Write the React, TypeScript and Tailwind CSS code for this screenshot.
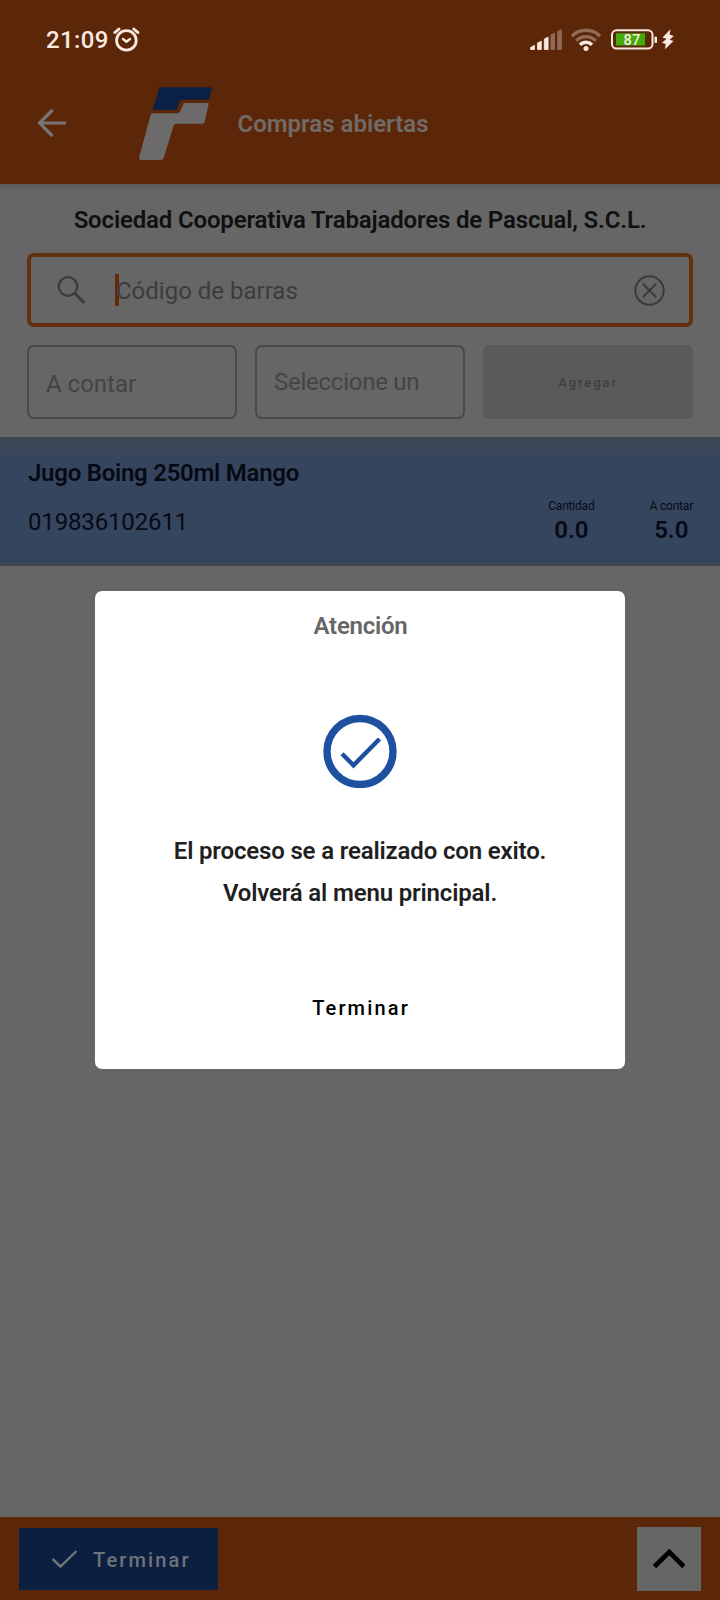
import React from "react";

function StatusBar() {
  return (
    <div className="flex h-[80px] shrink-0 items-start justify-between pl-[46px] pr-[46px]">
      <div className="flex items-center pt-[26px]">
        <span className="w-[63px] text-[24px] font-medium leading-[28px] tracking-[0.35px] text-[#fbe9e0]">21:09</span>
        <svg className="ml-[4px]" width="28" height="28" viewBox="0 0 28 28" fill="none" stroke="#fbe9e0" strokeLinecap="round">
          <circle cx="13.4" cy="14.4" r="9.8" strokeWidth="2.800" />
          <path d="M1.800 6.600L6 3M25 6.600L20.800 3" strokeWidth="2.800" />
          <path d="M10 13l3.400 2.800 3.600-2.800" strokeWidth="2.400" />
        </svg>
      </div>
      <svg className="mt-[26px]" width="145" height="28" viewBox="529 26 145 28" fill="none">
        <g fill="#fbe9e0" stroke="#fbe9e0" strokeWidth="0.800" strokeLinejoin="round">
          <path d="M530.500 49.500v-2l4-2.200v4.200zM537.500 49.500v-6.500l3.800-1.800v8.300zM544.300 49.500V39l3.800-2v12.500z" />
        </g>
        <g fill="#916b57" stroke="#916b57" strokeWidth="0.800" strokeLinejoin="round">
          <path d="M550.900 49.500V35l3.600-2v16.500zM557.700 49.500V31.600l3.700-1.900v19.800z" />
        </g>
        <path d="M572 36.200a19.500 19.500 0 0 1 28 0" stroke="#916b57" strokeWidth="3.400" />
        <path d="M576.200 40.800a13.500 13.500 0 0 1 19.600 0" stroke="#916b57" strokeWidth="3.400" />
        <path d="M580 44.700a8.500 8.500 0 0 1 12 0" stroke="#fbe9e0" strokeWidth="3.400" />
        <circle cx="586" cy="48.400" r="2.500" fill="#fbe9e0" />
        <rect x="612" y="30.300" width="40.500" height="18.200" rx="4.500" stroke="#fbe9e0" strokeWidth="2" />
        <rect x="616" y="33.300" width="29" height="12.200" fill="#43ab0b" />
        <rect x="654.500" y="36.500" width="2.500" height="6.500" rx="1" fill="#fbe9e0" />
        <text x="632" y="45" textAnchor="middle" fill="#fbe9e0" className="font-['Roboto'] text-[14.500px] font-medium tracking-[0.300px]">87</text>
        <path d="M670.500 29.300l-8 8.200 4 1.300-4.500 4 3.700 1.200-.700 5.300 8.500-8.300-3.800-1.200 4-3.800-4-1.500z" fill="#fbe9e0" />
      </svg>
    </div>
  );
}

function Header() {
  return (
    <header className="flex h-[184px] shrink-0 flex-col bg-[#5b2708]">
      <StatusBar />
      <div className="flex h-[87px] items-center pl-[36px]">
        <svg className="mb-[2px]" width="32" height="30" viewBox="0 0 32 30" fill="none" stroke="#797474" strokeWidth="3.200">
          <path d="M30 15H3.500M16.500 2L3.500 15l13 13" />
        </svg>
        <svg className="ml-[70px]" width="76" height="76" viewBox="138 86 76 76">
          <path d="M161 87.300H210.500Q212 87.300 211.700 88.700L209.500 98.500Q209.200 99.800 207.800 99.800H182Q180 99.800 179.300 101.600L176.500 110H152.500L159.300 88.600Q159.700 87.300 161 87.300Z" fill="#0b2045" />
          <path d="M183.800 103H208.800L204.800 121.700Q204.300 123.700 202.300 123.700H176Q174.200 123.700 173.700 125.500L164 157Q163 160 160.500 160H141.500Q138.400 160 139.200 157L150.800 114.500Q151.300 113.200 152.500 113.200H177.500Q179.300 113.200 180 111.400Z" fill="#6c6a6a" />
        </svg>
        <h1 className="ml-[23.500px] text-[24px] font-semibold leading-[28px] text-[#716a67]">Compras abiertas</h1>
      </div>
    </header>
  );
}

function SearchForm() {
  return (
    <section className="flex h-[253px] shrink-0 flex-col bg-[linear-gradient(to_bottom,#595959,#666666_6px)] px-[27px]">
      <h2 className="mt-[22px] whitespace-nowrap text-center text-[24px] font-semibold leading-[28px] tracking-[-0.160px] text-[#101010]">
        Sociedad Cooperativa Trabajadores de Pascual, S.C.L.
      </h2>
      <div className="mt-[19px] flex h-[74px] shrink-0 items-center rounded-[7px] border-[4px] border-[#62300f] pl-[26px] pr-[24px]">
        <svg width="29" height="30" viewBox="0 0 29 30" fill="none" stroke="#3b3b3b" strokeWidth="2.200">
          <circle cx="11" cy="11.500" r="9.300" />
          <path d="M17.800 18.300l9.500 9.500" strokeWidth="3" />
        </svg>
        <div className="ml-[29px] h-[32px] w-[4px] bg-[#622a08]" />
        <span className="ml-[-3px] pt-[2px] text-[24px] leading-[28px] text-[#3c3c3c]">Código de barras</span>
        <svg className="ml-auto" width="31" height="31" viewBox="0 0 31 31" fill="none" stroke="#3b3b3b" strokeWidth="2">
          <circle cx="15.500" cy="15.500" r="14.200" />
          <path d="M8.800 8.800l13.400 13.400M22.200 8.800L8.800 22.200" />
        </svg>
      </div>
      <div className="mt-[18px] grid grid-cols-3 gap-[18px]">
        <div className="flex h-[74px] items-center rounded-[7px] border-[2px] border-[#494949] pl-[17px] text-[24px] leading-[28px] text-[#444444]">
          <span className="pt-[3px]">A contar</span>
        </div>
        <div className="flex h-[74px] items-center rounded-[7px] border-[2px] border-[#494949] pl-[17px] text-[24px] leading-[28px] tracking-[-0.250px] text-[#444444]">
          <span className="pb-[1px]">Seleccione un</span>
        </div>
        <div className="flex h-[74px] items-center justify-center rounded-[6px] bg-[#5a5a5a] text-[13px] font-medium tracking-[1.900px] text-[#404040]">
          <span className="pt-[2px]">Agregar</span>
        </div>
      </div>
    </section>
  );
}

function Amount({ label, value }: { label: string; value: string }) {
  return (
    <div className="flex flex-col items-center">
      <span className="text-[12px] leading-[14px] tracking-[-0.200px]">{label}</span>
      <span className="mt-[3px] text-[24px] font-semibold leading-[28px]">{value}</span>
    </div>
  );
}

function ProductRow() {
  return (
    <section className="flex h-[129px] shrink-0 items-start justify-between border-b-[3px] border-[#43464e] bg-[linear-gradient(to_bottom,#3c4652,#36455e_24px)] pl-[28px] pr-[27px] text-[#050a14]">
      <div className="flex flex-col">
        <span className="mt-[22px] text-[24px] font-semibold leading-[28px] tracking-[-0.260px]">Jugo Boing 250ml Mango</span>
        <span className="mt-[21px] text-[24px] leading-[28px] tracking-[-0.150px]">019836102611</span>
      </div>
      <div className="mt-[62px] flex gap-[55px]">
        <Amount label="Cantidad" value="0.0" />
        <Amount label="A contar" value="5.0" />
      </div>
    </section>
  );
}

function Footer() {
  return (
    <footer className="flex h-[83px] shrink-0 items-start justify-between bg-[#5b2708] pl-[19px] pr-[19px]">
      <button className="mt-[11px] flex h-[62px] w-[199px] items-center bg-[#0b2040] pl-[33px] text-[20px] font-medium tracking-[2.150px] text-[#707378]">
        <svg width="26" height="20" viewBox="0 0 26 20" fill="none" stroke="#707378" strokeWidth="2.400">
          <path d="M.500 10l8 7.500L24.500 2" />
        </svg>
        <span className="ml-[15px] pt-[2px]">Terminar</span>
      </button>
      <button className="mt-[10px] flex h-[64px] w-[64px] items-center justify-center bg-[#666666]">
        <svg width="34" height="22" viewBox="0 0 34 22" fill="none" stroke="#000" strokeWidth="4.600">
          <path d="M2.500 18.500L17.300 4l14.500 14.500" />
        </svg>
      </button>
    </footer>
  );
}

function Dialog() {
  return (
    <div role="dialog" className="absolute left-[95px] top-[591px] flex h-[478px] w-[530px] flex-col items-center rounded-[7px] bg-white">
      <h3 className="mt-[21px] pl-px text-[24px] font-semibold leading-[28px] tracking-[-0.250px] text-[#666666]">Atención</h3>
      <svg className="mt-[74px]" width="74" height="74" viewBox="0 0 74 74" fill="none" stroke="#1e50a0">
        <circle cx="37" cy="37.500" r="33" strokeWidth="7.400" />
        <path d="M19 39.700L30.500 51.300L56.500 25" strokeWidth="4.400" />
      </svg>
      <p className="mt-[43px] whitespace-nowrap text-center text-[24px] font-semibold leading-[41.500px] tracking-[-0.160px] text-[#1f1f1f]">
        El proceso se a realizado con exito.
        <br />
        Volverá al menu principal.
      </p>
      <button className="mt-[82px] pl-[2px] text-[20px] font-medium leading-[24px] tracking-[2.150px] text-black">Terminar</button>
    </div>
  );
}

export default function App() {
  return (
    <div className="relative flex h-[1600px] w-[720px] flex-col overflow-hidden bg-[#666666] font-['Roboto',sans-serif]">
      <Header />
      <SearchForm />
      <ProductRow />
      <main className="grow" />
      <Footer />
      <Dialog />
    </div>
  );
}
